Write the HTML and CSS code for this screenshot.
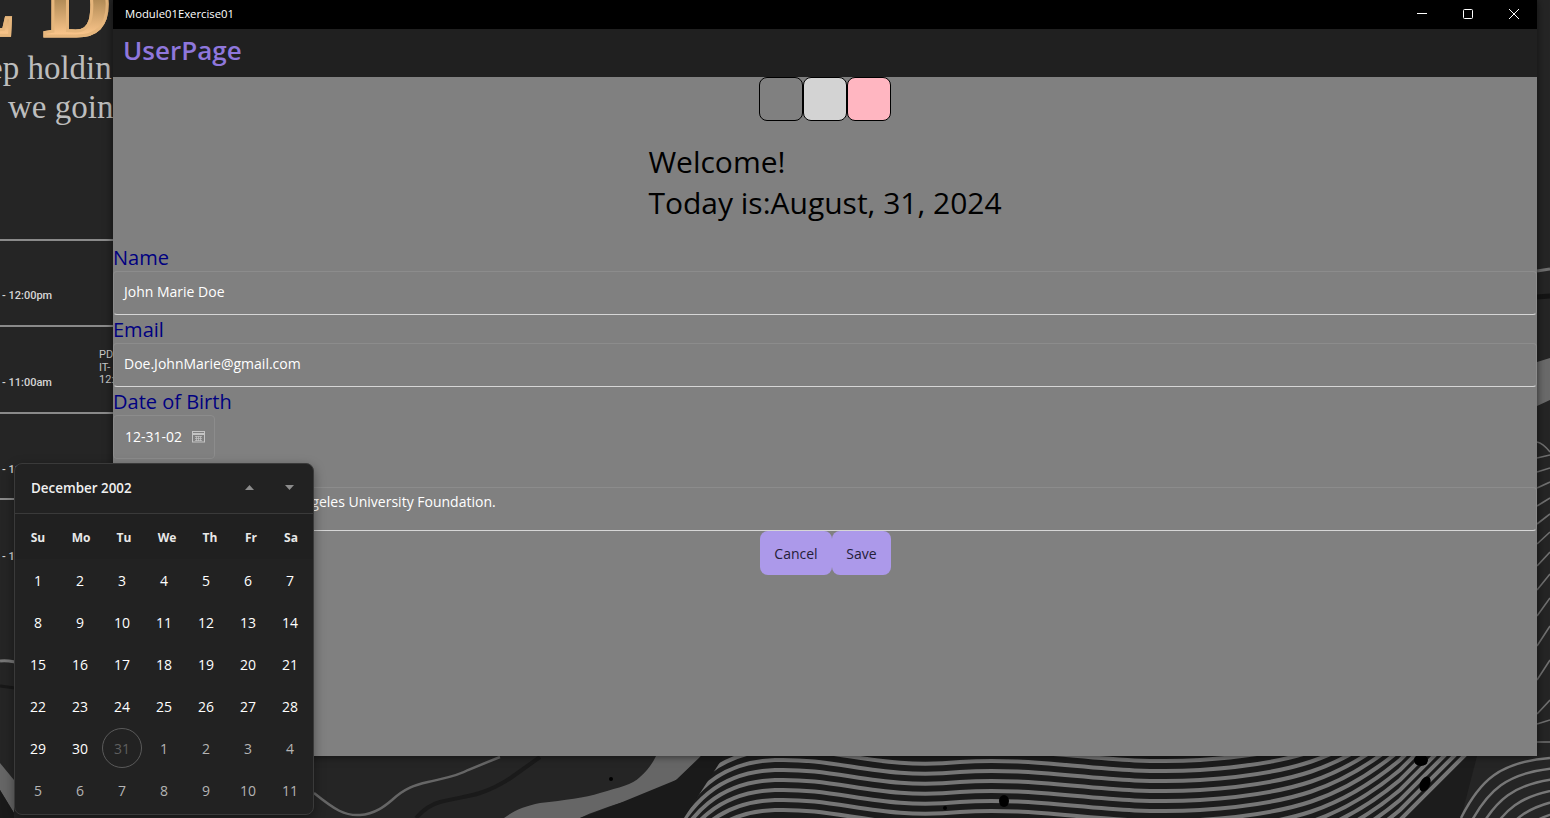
FILE: index.html
```html
<!DOCTYPE html>
<html lang="en">
<head>
    <meta charset="UTF-8">
    <title>Module01Exercise01</title>
    <link rel="stylesheet" href="styles.css">
</head>
<body>
    <!-- Desktop wallpaper behind the app -->
    <div class="desktop">
        <span class="big-letters">ED</span>
        <span class="wall-line line-one">ep holdin</span>
        <span class="wall-line line-two">we goin</span>
        <span class="row-rule" style="top: 239px"></span>
        <span class="row-rule" style="top: 325px"></span>
        <span class="row-rule" style="top: 412px"></span>
        <span class="row-rule" style="top: 498px"></span>
        <span class="row-time" style="top: 289px">- 12:00pm</span>
        <span class="row-time" style="top: 376px">- 11:00am</span>
        <span class="row-time" style="top: 463px">- 11:00am</span>
        <span class="row-time" style="top: 550px">- 11:00am</span>
        <span class="row-class">PD<br>IT-<br>12:</span>

        <svg class="waves" width="1550" height="818" viewBox="0 0 1550 818">
            <defs>
                <path id="stripe" d="M660 860 C690 800 720 772 775 770 C840 768 880 790 960 782 C1040 776 1110 796 1200 790 C1290 784 1340 770 1400 720 L1490 630" fill="none" stroke="#767676" stroke-width="4"/>
                <path id="fan" d="M1461 818 C1480 780 1500 762 1550 758" fill="none" stroke="#777" stroke-width="2.5"/>
                <clipPath id="stripe-area"><path d="M684 818L724 756H1477L1461 818Z"/></clipPath>
            </defs>
            <!-- bits left of the calendar -->
            <path d="M0 661 C6 660 10 661 15 662" fill="none" stroke="#777" stroke-width="3"/>
            <path d="M0 686 L15 688" fill="none" stroke="#181818" stroke-width="3"/>
            <path d="M0 763 L14 780 L14 813 L0 790Z" fill="#666"/>
            <path d="M0 790 L14 813 L14 818 L0 818Z" fill="#1a1a1a"/>
            <!-- bottom strip -->
            <path d="M314 793 C335 810 345 816 360 815 C375 814 385 806 392 800 C405 788 415 785 428 782 C445 778 458 776 468 770 L500 757" fill="none" stroke="#666" stroke-width="2.5"/>
            <path d="M416 818 C425 808 432 804 440 802 C455 798 468 797 480 793 C495 788 503 783 512 777 L540 757" fill="none" stroke="#1a1a1a" stroke-width="4"/>
            <path d="M504 818 C515 810 525 806 540 803 C565 800 585 798 600 793 C620 787 632 785 640 777 C648 770 652 764 656 756 L701 756 C692 768 686 774 676 780 C660 790 640 798 620 803 C605 808 592 812 580 818Z" fill="#666"/>
            <path d="M580 818 L620 803 L676 780 L701 756 L724 756 L684 818Z" fill="#1a1a1a"/>
            <path d="M684 818L724 756H1477L1461 818Z" fill="#1c1c1c"/>
            <g clip-path="url(#stripe-area)">
                <use href="#stripe" y="-60"/><use href="#stripe" y="-50"/><use href="#stripe" y="-40"/>
                <use href="#stripe" y="-30"/><use href="#stripe" y="-20"/><use href="#stripe" y="-10"/>
                <use href="#stripe"/><use href="#stripe" y="10"/><use href="#stripe" y="20"/>
                <use href="#stripe" y="30"/><use href="#stripe" y="40"/><use href="#stripe" y="50"/>
                <use href="#stripe" y="60"/><use href="#stripe" y="70"/><use href="#stripe" y="80"/>
                <use href="#stripe" y="90"/><use href="#stripe" y="100"/>
            </g>
            <use href="#fan"/><use href="#fan" x="7" y="10"/><use href="#fan" x="14" y="20"/><use href="#fan" x="21" y="30"/><use href="#fan" x="28" y="40"/><use href="#fan" x="35" y="50"/>
            <circle cx="611" cy="779" r="2" fill="#000"/>
            <ellipse cx="1004" cy="801" rx="5" ry="6" fill="#000"/>
            <circle cx="945" cy="808" r="2" fill="#000"/>
            <ellipse cx="1421" cy="760" rx="7" ry="6" fill="#000"/>
            <ellipse cx="1425" cy="784" rx="5" ry="8" transform="rotate(25 1425 784)" fill="#000"/>
            <!-- strip right of the window -->
            <path d="M1537 271 L1550 269" stroke="#6e6e6e" stroke-width="3" fill="none"/>
            <path d="M1537 297 L1550 296" stroke="#141414" stroke-width="5" fill="none"/>
            <path d="M1537 362 L1550 358 V400 L1537 406Z" fill="#6a6a6a"/>
            <path d="M1537 442 C1542 443 1546 447 1550 452 M1537 458 L1550 455 M1537 472 L1550 468 M1537 488 L1550 482 M1537 506 L1550 498 M1537 524 L1550 514 M1537 544 L1550 532 M1537 566 L1550 552 M1537 590 L1550 574 M1537 616 L1550 598 M1537 646 L1550 626 M1537 680 L1550 660 M1537 714 L1550 700 M1537 724 L1550 720 M1537 742 L1550 742" stroke="#707070" stroke-width="1.6" fill="none"/>
        </svg>
    </div>

    <!-- App window -->
    <div class="window">
        <div class="title-bar">
            <span class="title-text">Module01Exercise01</span>
            <div class="caption-buttons">
                <span class="caption-btn">
                    <svg width="10" height="10" viewBox="0 0 10 10"><path d="M0 4.5H10" stroke="#fff" fill="none"/></svg>
                </span>
                <span class="caption-btn">
                    <svg width="10" height="10" viewBox="0 0 10 10"><rect x="0.5" y="0.5" width="9" height="9" rx="1" stroke="#fff" fill="none"/></svg>
                </span>
                <span class="caption-btn">
                    <svg width="10" height="10" viewBox="0 0 10 10"><path d="M0 0L10 10M10 0L0 10" stroke="#fff" fill="none"/></svg>
                </span>
            </div>
        </div>

        <div class="nav-bar">UserPage</div>

        <div class="page">
            <div class="swatches">
                <button class="swatch swatch-gray"></button>
                <button class="swatch swatch-light"></button>
                <button class="swatch swatch-pink"></button>
            </div>

            <div class="welcome">
                <div>Welcome!</div>
                <div>Today is:August, 31, 2024</div>
            </div>

            <div class="form">
                <label class="field-label">Name</label>
                <div class="entry">John Marie Doe</div>

                <label class="field-label">Email</label>
                <div class="entry">Doe.JohnMarie@gmail.com</div>

                <label class="field-label">Date of Birth</label>
                <div class="date-picker">
                    <span>12-31-02</span>
                    <svg width="13" height="13" viewBox="0 0 13 13" fill="none" stroke="#c4c4c4">
                        <rect x="0.5" y="1.5" width="12" height="10.5"/>
                        <path d="M0.5 4H12.5" stroke-width="2"/>
                        <path d="M3 6.5H10M3 8.5H10M3 10.5H10M4.5 6V11M6.5 6V11M8.5 6V11" stroke-width="0.7"/>
                    </svg>
                </div>

                <label class="field-label">School</label>
                <div class="entry entry-multiline">Currently Studying At The Angeles University Foundation.</div>
            </div>

            <div class="actions">
                <button class="action-btn btn-cancel">Cancel</button>
                <button class="action-btn btn-save">Save</button>
            </div>
        </div>
    </div>

    <!-- Calendar flyout of the date picker -->
    <div class="calendar">
        <div class="cal-head">
            <span class="cal-month">December 2002</span>
            <div class="cal-arrows">
                <svg width="9" height="5" viewBox="0 0 9 5"><path d="M4.5 0L9 5H0Z" fill="#8c8c8c"/></svg>
                <svg width="9" height="5" viewBox="0 0 9 5"><path d="M0 0H9L4.5 5Z" fill="#8c8c8c"/></svg>
            </div>
        </div>
        <div class="cal-weekdays">
            <span>Su</span><span>Mo</span><span>Tu</span><span>We</span><span>Th</span><span>Fr</span><span>Sa</span>
        </div>
        <div class="cal-days">
            <span>1</span><span>2</span><span>3</span><span>4</span><span>5</span><span>6</span><span>7</span>
            <span>8</span><span>9</span><span>10</span><span>11</span><span>12</span><span>13</span><span>14</span>
            <span>15</span><span>16</span><span>17</span><span>18</span><span>19</span><span>20</span><span>21</span>
            <span>22</span><span>23</span><span>24</span><span>25</span><span>26</span><span>27</span><span>28</span>
            <span>29</span><span>30</span><span class="selected">31</span>
            <span class="muted">1</span><span class="muted">2</span><span class="muted">3</span><span class="muted">4</span>
            <span class="muted">5</span><span class="muted">6</span><span class="muted">7</span><span class="muted">8</span><span class="muted">9</span><span class="muted">10</span><span class="muted">11</span>
        </div>
    </div>
</body>
</html>
```

FILE: styles.css
```css
/* Basic Styling */
html, body {
    margin: 0;
    height: 100%;
    overflow: hidden;
}

body {
    position: relative;
    width: 1550px;
    height: 818px;
    font-family: "Open Sans", "Liberation Sans", sans-serif;
    background-color: #242424;
}

button {
    font-family: inherit;
    cursor: pointer;
}

/* Wallpaper */
.desktop {
    position: absolute;
    inset: 0;
    overflow: hidden;
    background-color: #252525;
}

.big-letters {
    position: absolute;
    left: -48px;
    top: -43px;
    font-family: "Liberation Serif", serif;
    font-weight: bold;
    font-size: 95px;
    line-height: 95px;
    letter-spacing: 28px;
    -webkit-text-stroke: 3px #e6b67c;
    background: linear-gradient(#b08a55 42px, #ffc98e 80px);
    background-clip: text;
    -webkit-background-clip: text;
    color: transparent;
}

.wall-line {
    position: absolute;
    font-family: "Liberation Serif", serif;
    font-size: 33px;
    line-height: 36px;
    color: #bdbdbd;
    white-space: nowrap;
}

.line-one { left: -12px; top: 50px; }
.line-two { left: 8px; top: 89px; }

.row-rule {
    position: absolute;
    left: 0;
    width: 113px;
    height: 2px;
    background-color: #8a8a8a;
}

.row-time {
    position: absolute;
    left: 2px;
    font-family: "Roboto", sans-serif;
    font-size: 11px;
    font-weight: 500;
    line-height: 14px;
    color: #d6d6d6;
    white-space: nowrap;
}

.row-class {
    position: absolute;
    left: 99px;
    top: 349px;
    font-family: "Roboto", sans-serif;
    font-size: 11px;
    line-height: 12.5px;
    color: #c8c8c8;
}

.waves {
    position: absolute;
    left: 0;
    top: 0;
}

/* App window */
.window {
    position: absolute;
    left: 113px;
    top: 0;
    width: 1424px;
    height: 756px;
    display: flex;
    flex-direction: column;
    background-color: #808080;
    box-shadow: 0 0 8px rgba(0, 0, 0, 0.6);
}

.title-bar {
    height: 29px;
    flex: none;
    display: flex;
    align-items: flex-start;
    justify-content: space-between;
    background-color: #000;
    color: #fff;
    font-size: 11.3px;
}

.title-text {
    padding: 6px 0 0 12px;
}

.caption-buttons {
    display: flex;
}

.caption-btn {
    width: 46px;
    height: 27px;
    display: flex;
    align-items: center;
    justify-content: center;
}

.nav-bar {
    height: 48px;
    flex: none;
    display: flex;
    align-items: center;
    padding: 0 0 7px 10px;
    box-sizing: border-box;
    background-color: #202020;
    color: #8f77dc;
    font-size: 26px;
    font-weight: 600;
}

.page {
    flex: 1;
    display: flex;
    flex-direction: column;
}

.swatches {
    display: flex;
    justify-content: center;
}

.swatch {
    width: 44px;
    height: 44px;
    padding: 0;
    border: 1px solid #000;
    border-radius: 8px;
}

.swatch-gray { background-color: #808080; }
.swatch-light { background-color: #d3d3d3; }
.swatch-pink { background-color: #ffb6c1; }

.welcome {
    align-self: center;
    margin-top: 20px;
    font-size: 30px;
    line-height: 41px;
    color: #000;
}

/* Form */
.form {
    display: flex;
    flex-direction: column;
    margin-top: 20px;
}

.field-label {
    font-size: 20px;
    line-height: 29px;
    height: 28px;
    color: #000080;
}

.entry {
    height: 44px;
    box-sizing: border-box;
    display: flex;
    align-items: center;
    padding: 0 0 4px 10px;
    font-size: 14px;
    color: #fff;
    border-top: 1px solid #8c8c8c;
    border-left: 1px solid #8c8c8c;
    border-right: 1px solid #8c8c8c;
    border-bottom: 1px solid #d6d6d6;
    border-radius: 4px;
}

.entry-multiline {
    align-items: flex-start;
    padding-top: 4px;
}

.date-picker {
    width: 102px;
    height: 44px;
    box-sizing: border-box;
    display: flex;
    align-items: center;
    gap: 10px;
    padding: 0 0 2px 11px;
    font-size: 14px;
    color: #fff;
    border: 1px solid #8c8c8c;
    border-radius: 4px;
}

.actions {
    display: flex;
    justify-content: center;
    padding-left: 1px;
}

.action-btn {
    height: 44px;
    padding: 0;
    border: none;
    border-radius: 8px;
    background-color: #ac99ea;
    color: #242038;
    font-size: 14px;
}

.btn-cancel { width: 72px; }
.btn-save { width: 59px; }

/* Calendar flyout */
.calendar {
    position: absolute;
    left: 14px;
    top: 463px;
    width: 300px;
    height: 352px;
    box-sizing: border-box;
    background-color: #222;
    border: 1px solid #3a3a3a;
    border-radius: 8px;
    color: #fff;
    box-shadow: 0 4px 12px rgba(0, 0, 0, 0.4);
}

.cal-head {
    height: 50px;
    box-sizing: border-box;
    display: flex;
    align-items: center;
    justify-content: space-between;
    padding: 0 19.5px 2px 16px;
    border-bottom: 1px solid #3a3a3a;
}

.cal-month {
    font-size: 13.4px;
    font-weight: 600;
    color: #f0f0f0;
}

.cal-arrows {
    display: flex;
    gap: 31px;
}

.cal-weekdays {
    height: 45px;
    box-sizing: border-box;
    display: grid;
    grid-template-columns: repeat(5, 43px) 39px 41px;
    align-items: center;
    justify-items: center;
    background-color: #202020;
    font-size: 12px;
    font-weight: 700;
    color: #e8e8e8;
    padding: 1px 0 0 1.5px;
}

.cal-days {
    display: grid;
    grid-template-columns: repeat(7, 42px);
    grid-auto-rows: 42px;
    align-items: center;
    justify-items: center;
    font-size: 14px;
    padding-left: 2px;
}

.cal-days span {
    width: 40px;
    height: 40px;
    display: flex;
    align-items: center;
    justify-content: center;
    box-sizing: border-box;
    border-radius: 50%;
}

.cal-days .muted {
    color: #b4b4b4;
}

.cal-days .selected {
    border: 1px solid #5a5a5a;
    color: #5f5f5f;
}
```
